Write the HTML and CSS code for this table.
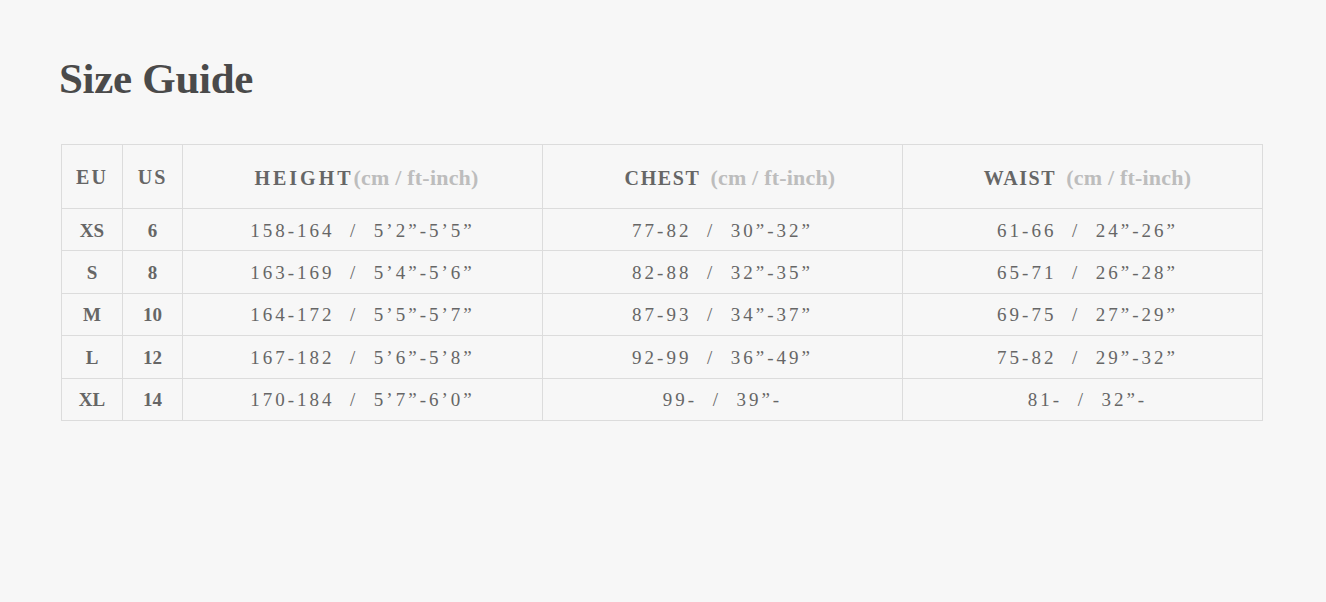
FILE: index.html
```html
<!DOCTYPE html>
<html>
<head>
<meta charset="utf-8">
<link rel="stylesheet" href="styles.css">
</head>
<body>
<div class="page">
  <h1 class="title">Size Guide</h1>
  <table class="guide">
    <colgroup>
      <col class="c-eu"><col class="c-us"><col class="c-wide"><col class="c-wide"><col class="c-wide">
    </colgroup>
    <thead>
      <tr>
        <th class="h-small">EU</th>
        <th class="h-small">US</th>
        <th class="hh"><span class="h-label wide">HEIGHT</span><span class="unit">(cm / ft-inch)</span></th>
        <th class="hc"><span class="h-label">CHEST</span> &nbsp;<span class="unit">(cm / ft-inch)</span></th>
        <th class="w"><span class="h-label">WAIST</span> &nbsp;<span class="unit">(cm / ft-inch)</span></th>
      </tr>
    </thead>
    <tbody>
      <tr><td class="sz">XS</td><td class="sz">6</td><td class="h">158-164&nbsp; /&nbsp; 5’2”-5’5”</td><td class="m">77-82&nbsp; /&nbsp; 30”-32”</td><td class="m w">61-66&nbsp; /&nbsp; 24”-26”</td></tr>
      <tr><td class="sz">S</td><td class="sz">8</td><td class="h">163-169&nbsp; /&nbsp; 5’4”-5’6”</td><td class="m">82-88&nbsp; /&nbsp; 32”-35”</td><td class="m w">65-71&nbsp; /&nbsp; 26”-28”</td></tr>
      <tr><td class="sz">M</td><td class="sz">10</td><td class="h">164-172&nbsp; /&nbsp; 5’5”-5’7”</td><td class="m">87-93&nbsp; /&nbsp; 34”-37”</td><td class="m w">69-75&nbsp; /&nbsp; 27”-29”</td></tr>
      <tr><td class="sz">L</td><td class="sz">12</td><td class="h">167-182&nbsp; /&nbsp; 5’6”-5’8”</td><td class="m">92-99&nbsp; /&nbsp; 36”-49”</td><td class="m w">75-82&nbsp; /&nbsp; 29”-32”</td></tr>
      <tr><td class="sz">XL</td><td class="sz">14</td><td class="h">170-184&nbsp; /&nbsp; 5’7”-6’0”</td><td class="m">99-&nbsp; /&nbsp; 39”-</td><td class="m w">81-&nbsp; /&nbsp; 32”-</td></tr>
    </tbody>
  </table>
</div>
</body>
</html>
```
FILE: styles.css
```css
html, body {
  margin: 0;
  padding: 0;
  background: #f7f7f7;
}
.page {
  padding: 55px 0 0 61px;
  font-family: "Liberation Serif", "Times New Roman", serif;
}
.title {
  margin: 0 0 41px -2px;
  font-size: 43px;
  line-height: 48px;
  font-weight: bold;
  color: #4a4a4a;
  letter-spacing: -0.3px;
}
.guide {
  border-collapse: collapse;
  width: 1202px;
  table-layout: fixed;
}
.c-eu { width: 61px; }
.c-us { width: 60px; }
.c-wide { width: 360px; }
.guide th, .guide td {
  border: 1px solid #dcdcdc;
  text-align: center;
  padding: 2px 0 0;
  color: #666;
}
.guide th {
  height: 61px;
  font-size: 20px;
  font-weight: bold;
}
.guide th.hh {
  padding-left: 8px;
}
.guide th.hc {
  padding-left: 15px;
}
.h-small {
  letter-spacing: 2px;
}
.h-label {
  letter-spacing: 1.6px;
}
.h-label.wide {
  letter-spacing: 3px;
}
.unit {
  color: #bdbdbd;
  font-weight: bold;
  font-size: 22px;
  letter-spacing: 0.2px;
}
.guide td {
  height: 39.4px;
  font-size: 19px;
}
.guide .w {
  padding-left: 10px;
}
.guide td.sz {
  font-weight: bold;
  font-size: 19px;
}
.guide td.h {
  letter-spacing: 3px;
}
.guide td.m {
  letter-spacing: 3px;
}
```
